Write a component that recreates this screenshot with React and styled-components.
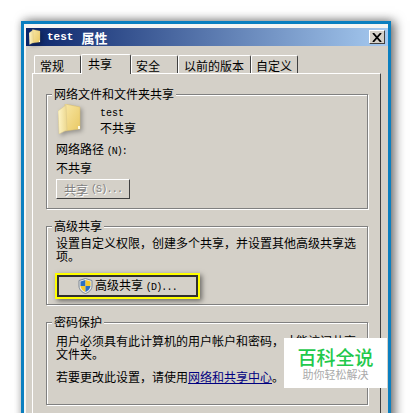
import React from 'react';
import styled, { createGlobalStyle } from 'styled-components';

const GlobalStyle = createGlobalStyle`
  html, body {
    margin: 0;
    height: 413px;
    overflow: hidden;
    background: #fff;
  }
`;

const Page = styled.div`
  position: relative;
  width: 412px;
  height: 413px;
  overflow: hidden;
  padding: 21px 0 0 21px;
  box-sizing: border-box;
  font-family: "Noto Sans CJK SC", sans-serif;
  font-size: 12px;
  line-height: 13px;
  color: #000;
`;

const Frame = styled.div`
  width: 370px;
  height: 420px;
  box-sizing: border-box;
  background: #d4d0c8;
  border: 3px solid #0a7fc0;
  border-bottom: 0;
  box-shadow: 4px 0 10px rgba(0, 0, 0, .55), 0 -2px 8px rgba(0, 0, 0, .08), -2px 0 6px rgba(0, 0, 0, .06);
`;

const Inner = styled.div`
  height: 100%;
  box-sizing: border-box;
  border-left: 2px solid #f6f5f2;
  border-top: 4px solid #f6f5f2;
`;

const TitleBar = styled.div`
  height: 18px;
  display: flex;
  align-items: center;
  padding: 0 3px 0 3px;
  background: linear-gradient(90deg, #0a246a, #a6caf0);
  color: #fff;
  font-weight: 700;
`;

const TitleText = styled.span`
  display: flex;
  align-items: center;
  gap: 8px;
  margin-left: 6px;
  font-size: 13px;
`;

const Latin = styled.span`
  font-family: "Liberation Mono", monospace;
  font-size: ${(p) => p.$size || 10}px;
  font-weight: ${(p) => (p.$bold ? 700 : 400)};
  letter-spacing: ${(p) => p.$spacing || 0}px;
`;

const CloseButton = styled.div`
  margin-left: auto;
  width: 16px;
  height: 14px;
  box-sizing: border-box;
  display: flex;
  align-items: center;
  justify-content: center;
  background: #d4d0c8;
  border: 1px solid;
  border-color: #fff #404040 #404040 #fff;
`;

const Tabs = styled.div`
  display: flex;
  align-items: flex-end;
  height: 20px;
  margin: 7px 0 0 8px;
`;

const Tab = styled.div`
  box-sizing: border-box;
  width: ${(p) => p.$width}px;
  height: ${(p) => (p.$active ? 20 : 18)}px;
  margin-bottom: ${(p) => (p.$active ? -1 : 0)}px;
  position: relative;
  z-index: ${(p) => (p.$active ? 1 : 0)};
  background: #d4d0c8;
  border: 1px solid;
  border-bottom: 0;
  border-color: #fff #404040 #fff #fff;
  border-radius: 2px 2px 0 0;
  padding: ${(p) => (p.$active ? 2 : 3)}px 0 0 ${(p) => p.$pad}px;
`;

const Panel = styled.div`
  width: 349px;
  height: 400px;
  margin-left: 6px;
  box-sizing: border-box;
  border: 1px solid;
  border-color: #fff #404040 #404040 #fff;
  padding: 13px 13px 0 13px;
  display: flex;
  flex-direction: column;
  gap: 10px;
`;

const Group = styled.fieldset`
  margin: 0;
  width: 322px;
  height: ${(p) => p.$height}px;
  box-sizing: border-box;
  border: 1px solid #808080;
  box-shadow: inset 1px 1px 0 #fff, 1px 1px 0 #fff;
  padding: ${(p) => p.$top || 3}px 10px 0 9px;
  min-width: 0;
`;

const Legend = styled.legend`
  margin-left: -4px;
  padding: 0 2px;
  background: #d4d0c8;
  line-height: 14px;
`;

const ShareInfo = styled.div`
  display: flex;
  gap: 18px;
  padding-left: 2px;
  margin-bottom: 8px;
`;

const ShareName = styled.div`
  display: flex;
  flex-direction: column;
  gap: 1px;
  padding-top: 3px;
`;

const PathLabel = styled.div`
  margin-top: 1px;
`;

const PathValue = styled.div`
  margin-top: 3px;
`;

const ShareButton = styled.div`
  width: 74px;
  height: 20px;
  margin-top: 5px;
  box-sizing: border-box;
  border: 1px solid;
  border-color: #fff #404040 #404040 #fff;
  color: #808080;
  text-shadow: 1px 1px 0 #fff;
  display: flex;
  align-items: center;
  justify-content: center;
  gap: 3px;
`;

const BodyText = styled.p`
  margin: ${(p) => p.$top || 0}px 0 0;
  width: 304px;
`;

const Highlight = styled.div`
  width: 145px;
  height: 26px;
  margin: 11px 0 0 -1px;
  box-sizing: border-box;
  border: 2px solid #ffff00;
  box-shadow: 2px 2px 5px rgba(0, 0, 0, .5);
`;

const AdvancedButton = styled.div`
  height: 100%;
  box-sizing: border-box;
  border: 2px solid #303030;
  background: #d4d0c8;
  display: flex;
  align-items: center;
  justify-content: center;
  gap: 2px;
`;

const Link = styled.a`
  color: #000080;
  text-decoration: underline;
`;

const Watermark = styled.div`
  position: absolute;
  left: 284px;
  top: 338px;
  width: 103px;
  height: 50px;
  background: #fff;
  display: flex;
  flex-direction: column;
  align-items: center;
  justify-content: center;
`;

const BrandName = styled.div`
  color: #1fc94c;
  font-size: 19px;
  line-height: 22px;
  font-weight: 500;
`;

const BrandSlogan = styled.div`
  color: #aaa;
  font-size: 11px;
  line-height: 13px;
`;

const FolderSvg = styled.svg`
  flex-shrink: 0;
  filter: drop-shadow(2px 2px 2px rgba(0, 0, 0, .3));
`;

const FolderIcon = ({ small }) => (
  <FolderSvg width={small ? 12 : 24} height={small ? 16 : 30} viewBox="0 0 24 30">
    <defs>
      <linearGradient id={small ? 'backS' : 'backL'} x1="0" x2="1" y1="0" y2="1">
        <stop offset="0" stopColor="#f8e6a4" />
        <stop offset="1" stopColor="#e9c964" />
      </linearGradient>
      <linearGradient id={small ? 'leafS' : 'leafL'} x1="0" x2="1" y1="0" y2="0">
        <stop offset="0" stopColor="#fff6c8" />
        <stop offset="1" stopColor="#ecd78e" />
      </linearGradient>
    </defs>
    <path d="M7 0 L22 3 V25 L7 27 Z" fill={`url(#${small ? 'backS' : 'backL'})`} stroke="#d9bd6c" strokeWidth=".5" />
    <path d="M0 7 L8 1 L9 26 L1 30 Z" fill={`url(#${small ? 'leafS' : 'leafL'})`} stroke="#d6c48a" strokeWidth=".5" />
    <path d="M20 22 L22 22 V25 L20 25 Z" fill="#fffbe0" />
  </FolderSvg>
);

const ShieldIcon = () => (
  <svg width="15" height="16" viewBox="0 0 14 16" style={{ flexShrink: 0 }}>
    <path d="M7 .5 L13.5 2.5 V8 C13.5 12 10 14.5 7 15.5 C4 14.5 .5 12 .5 8 V2.5 Z" fill="#e8e8e8" stroke="#7b8794" strokeWidth="1" />
    <path d="M7 2 L2 3.5 V8 H7 Z" fill="#2a6fc4" />
    <path d="M7 2 L12 3.5 V8 H7 Z" fill="#f5c92c" />
    <path d="M2 8 H7 V14 C4.5 13 2.4 11 2 8 Z" fill="#f5c92c" />
    <path d="M12 8 H7 V14 C9.5 13 11.6 11 12 8 Z" fill="#2a6fc4" />
  </svg>
);

const CloseIcon = () => (
  <svg width="10" height="9" viewBox="0 0 10 9">
    <path d="M1 0 L9 9 M9 0 L1 9" stroke="#000" strokeWidth="1.8" />
  </svg>
);

const App = () => (
  <Page>
    <GlobalStyle />
    <Frame>
      <Inner>
        <TitleBar>
          <FolderIcon small />
          <TitleText>
            <Latin $size={11} $bold>test</Latin>
            <span>属性</span>
          </TitleText>
          <CloseButton><CloseIcon /></CloseButton>
        </TitleBar>
        <Tabs>
          <Tab $width={47} $pad={5}>常规</Tab>
          <Tab $width={50} $pad={6} $active>共享</Tab>
          <Tab $width={47} $pad={4}>安全</Tab>
          <Tab $width={73} $pad={5}>以前的版本</Tab>
          <Tab $width={47} $pad={4}>自定义</Tab>
        </Tabs>
        <Panel>
          <Group $height={122}>
            <Legend>网络文件和文件夹共享</Legend>
            <ShareInfo>
              <FolderIcon />
              <ShareName>
                <Latin>test</Latin>
                <span>不共享</span>
              </ShareName>
            </ShareInfo>
            <PathLabel>网络路径 <Latin $spacing={-1}>(N):</Latin></PathLabel>
            <PathValue>不共享</PathValue>
            <ShareButton>共享<Latin $spacing={-.8}>(S)...</Latin></ShareButton>
          </Group>
          <Group $height={86}>
            <Legend>高级共享</Legend>
            <BodyText>设置自定义权限，创建多个共享，并设置其他高级共享选项。</BodyText>
            <Highlight>
              <AdvancedButton>
                <ShieldIcon />
                <span>高级共享 <Latin $spacing={-.8}>(D)...</Latin></span>
              </AdvancedButton>
            </Highlight>
          </Group>
          <Group $height={90} $top={5}>
            <Legend>密码保护</Legend>
            <BodyText>用户必须具有此计算机的用户帐户和密码，才能访问共享文件夹。</BodyText>
            <BodyText $top={10}>若要更改此设置，请使用<Link>网络和共享中心</Link>。</BodyText>
          </Group>
        </Panel>
      </Inner>
    </Frame>
    <Watermark>
      <BrandName>百科全说</BrandName>
      <BrandSlogan>助你轻松解决</BrandSlogan>
    </Watermark>
  </Page>
);

export default App;
